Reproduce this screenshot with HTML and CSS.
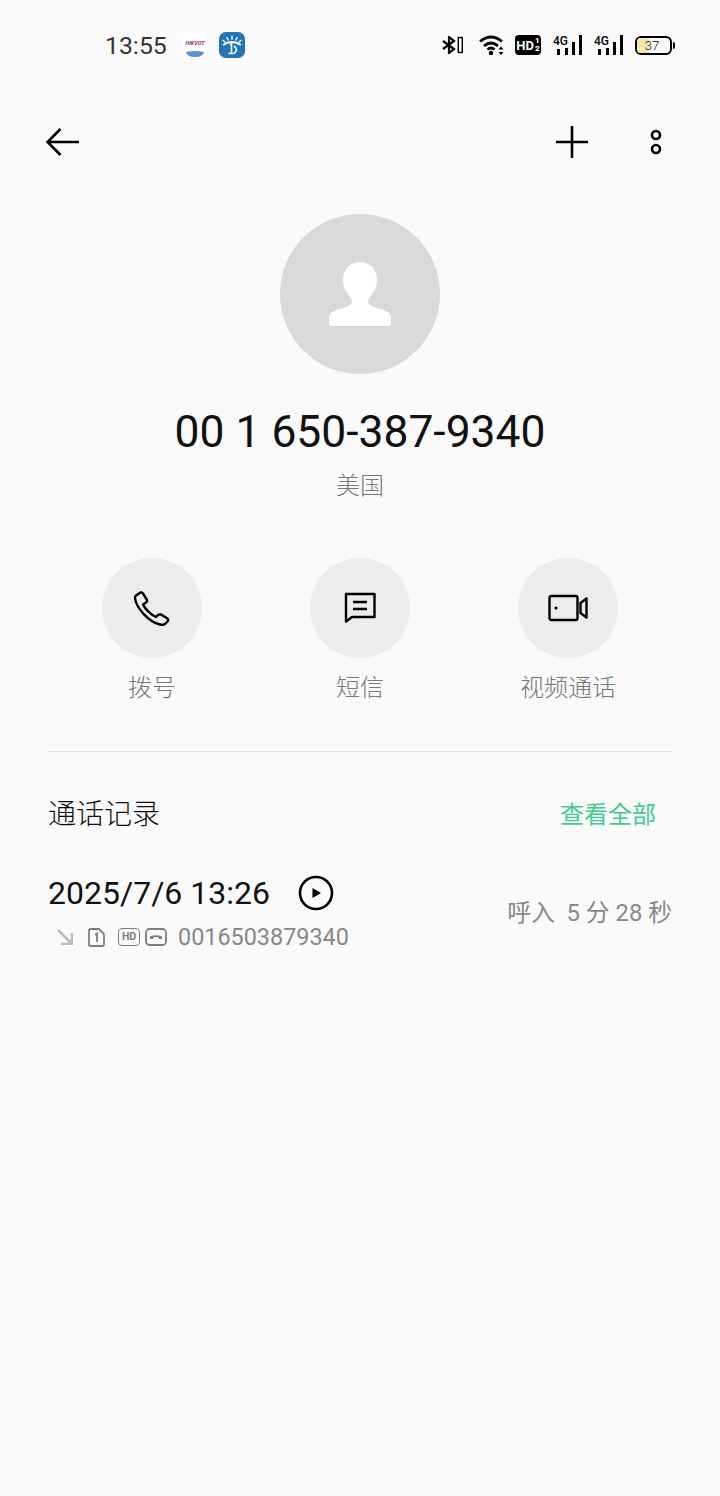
FILE: index.html
```html
<!DOCTYPE html>
<html lang="zh-CN">

<head>
      <meta charset="UTF-8">
      <meta name="viewport" content="width=device-width, initial-scale=1.0">
      <title>通话详情</title>
      <link rel="stylesheet" href="styles.css">
</head>

<body>
      <!-- Status bar -->
      <div class="status-bar">
            <div class="status-left">
                  <span class="time">13:55</span>
                  <svg class="app-hik" viewBox="0 0 26 26">
                        <rect width="24" height="26" rx="5" fill="#fff" />
                        <text x="12" y="13" text-anchor="middle" class="hik-text">HIKVOT</text>
                        <path d="M3 20q9-2 18 0q-1 5-9 5t-9-5z" fill="#5b8fd0" />
                  </svg>
                  <svg class="app-blue" viewBox="0 0 26 26">
                        <rect width="26" height="26" rx="7" fill="#2176b6" />
                        <path d="M4 13q9-6 18 0" fill="none" stroke="#fff" stroke-width="1.800" />
                        <path d="M13 3.500v4M7.500 5l2 3.500M18.500 5l-2 3.500M3.500 8l3 2.500M22.500 8l-3 2.500" stroke="#fff" stroke-width="1.400" />
                        <path d="M11 13l1.500-1v9M9.500 21.500h5M15 14q5 3.500 0 7.500" fill="none" stroke="#fff" stroke-width="1.600" />
                  </svg>
            </div>
            <div class="status-right">
                  <svg class="ic-bt" viewBox="0 0 21 18">
                        <path d="M1 5l11 8-5 4V1l5 4-11 8" fill="none" stroke="#000" stroke-width="2.200" />
                        <rect x="16.300" y="1.500" width="4" height="15" fill="none" stroke="#000" stroke-width="1.400" />
                  </svg>
                  <svg class="ic-wifi" viewBox="0 0 26 20">
                        <path d="M1 6.500q11-9 22 0M5 11q7-6 14 0M8.500 14.500q3.500-3 7 0" fill="none" stroke="#000" stroke-width="2.700" />
                        <circle cx="12" cy="18" r="2.200" />
                        <path d="M22 11.500l2.500 3h-5zM22 20l2.500-3h-5z" />
                  </svg>
                  <div class="ic-hd">HD<span class="hd-nums"><b>1</b><b>2</b></span></div>
                  <svg class="ic-signal" viewBox="0 0 29 20">
                        <text x="0" y="10" class="sig-text">4G</text>
                        <path d="M4 14h3v6H4zM12 13h3v7h-3zM19 7h3v13h-3zM26 0h3v20h-3z" />
                  </svg>
                  <svg class="ic-signal" viewBox="0 0 29 20">
                        <text x="0" y="10" class="sig-text">4G</text>
                        <path d="M4 14h3v6H4zM12 13h3v7h-3zM19 7h3v13h-3zM26 0h3v20h-3z" />
                  </svg>
                  <div class="ic-battery">
                        <div class="battery-body">
                              <div class="battery-level"></div>
                              <span class="battery-num">37</span>
                        </div>
                        <div class="battery-cap"></div>
                  </div>
            </div>
      </div>

      <!-- Toolbar -->
      <div class="toolbar">
            <svg class="ic-back" viewBox="0 0 34 34">
                  <path d="M33 17H2M14.500 4L1.500 17l13 13" fill="none" stroke="#000" stroke-width="2.600" />
            </svg>
            <div class="toolbar-right">
                  <svg class="ic-add" viewBox="0 0 34 34">
                        <path d="M17 1v32M1 17h32" fill="none" stroke="#000" stroke-width="2.600" />
                  </svg>
                  <svg class="ic-more" viewBox="0 0 16 28">
                        <circle cx="8" cy="7" r="4" fill="none" stroke="#000" stroke-width="2.600" />
                        <circle cx="8" cy="21" r="4" fill="none" stroke="#000" stroke-width="2.600" />
                  </svg>
            </div>
      </div>

      <!-- Contact -->
      <div class="contact">
            <svg class="avatar" viewBox="0 0 160 160">
                  <circle cx="80" cy="80" r="80" fill="#d9d9d9" />
                  <path fill="#fff" d="M80 48C69 48 63 56 63 66C63 74 67 79 71 84C73 88 72 91 66 93L54 97C50 99 49 101 49 105V110Q49 112 51 112H109Q111 112 111 110V105C111 101 110 99 106 97L94 93C88 91 87 88 89 84C93 79 97 74 97 66C97 56 91 48 80 48Z" />
            </svg>
            <div class="contact-number">00 1 650-387-9340</div>
            <div class="contact-region">美国</div>
      </div>

      <!-- Actions -->
      <div class="actions">
            <div class="action">
                  <div class="action-circle">
                        <svg viewBox="0 0 40 40">
                              <path d="M4 7.500L8.500 4.500Q10 4 11 5.500L15 12Q15.500 13.500 14 14.500L11 16.500C13 21 19 27 24 29L26 27Q27.500 26 29 26.500L35.500 30.500Q37 32 35.500 33.500L33 36Q31 37.500 28 36.500C17 34 4 20 3 10Q3 8.500 4 7.500Z" fill="none" stroke="#000" stroke-width="2.400" stroke-linejoin="round" />
                        </svg>
                  </div>
                  <div class="action-label">拨号</div>
            </div>
            <div class="action">
                  <div class="action-circle">
                        <svg viewBox="0 0 40 40">
                              <path d="M6 6H34.500V29H12L6 33.500Z" fill="none" stroke="#000" stroke-width="2.400" stroke-linejoin="round" />
                              <path d="M13 14H27M13 21H27" stroke="#000" stroke-width="2.400" />
                        </svg>
                  </div>
                  <div class="action-label">短信</div>
            </div>
            <div class="action">
                  <div class="action-circle">
                        <svg viewBox="0 0 40 40">
                              <rect x="1.500" y="8" width="28" height="24" rx="2" fill="none" stroke="#000" stroke-width="2.400" />
                              <circle cx="8" cy="20" r="1.600" />
                              <path d="M38.500 10.500V29.500L32.500 25V15Z" fill="none" stroke="#000" stroke-width="2.400" stroke-linejoin="round" />
                        </svg>
                  </div>
                  <div class="action-label">视频通话</div>
            </div>
      </div>

      <div class="divider"></div>

      <!-- Call log -->
      <div class="log-header">
            <div class="log-title">通话记录</div>
            <div class="log-all">查看全部</div>
      </div>

      <div class="log-row">
            <div class="log-left">
                  <div class="log-date">
                        <span>2025/7/6 13:26</span>
                        <svg class="ic-play" viewBox="0 0 36 36">
                              <circle cx="18" cy="18" r="16" fill="none" stroke="#000" stroke-width="2.600" />
                              <path d="M14.500 13L23 18l-8.500 5z" />
                        </svg>
                  </div>
                  <div class="log-sub">
                        <svg class="ic-in" viewBox="0 0 16 16">
                              <path d="M1 1L14 14M15 4V15H4" fill="none" stroke="#bdbdbd" stroke-width="2.600" />
                        </svg>
                        <svg class="ic-sim" viewBox="0 0 17 19">
                              <path d="M2.500 1H11L16 6V16.500Q16 18 14.500 18H2.500Q1 18 1 16.500V2.500Q1 1 2.500 1Z" fill="none" stroke="#7d7d7d" stroke-width="1.800" />
                              <path d="M7 7L9 5.500V14" fill="none" stroke="#7d7d7d" stroke-width="1.800" />
                        </svg>
                        <div class="ic-tag">HD</div>
                        <svg class="ic-hang" viewBox="0 0 22 18">
                              <rect x="1" y="1" width="20" height="16" rx="3.500" fill="none" stroke="#7d7d7d" stroke-width="1.800" />
                              <path d="M5 11V8.500Q11 6 17 8.500V11H14V9.500Q11 8.500 8 9.500V11Z" fill="#7d7d7d" />
                        </svg>
                        <span class="log-number">0016503879340</span>
                  </div>
            </div>
            <div class="log-info">呼入&nbsp; 5 分 28 秒</div>
      </div>
</body>

</html>
```

FILE: styles.css
```css
body {
      margin: 0;
      background-color: #fafafa;
      color: #000;
      font-family: Roboto, "Noto Sans CJK SC", sans-serif;
}

svg {
      display: block;
      flex: none;
}

/* Status bar */
.status-bar {
      height: 90px;
      display: flex;
      justify-content: space-between;
      align-items: center;
      padding: 0 45px 0 105px;
}

.status-left,
.status-right {
      display: flex;
      align-items: center;
}

.time {
      width: 78px;
      font-size: 24.800px;
      color: #333;
}

.app-hik,
.app-blue {
      width: 26px;
      height: 26px;
}

.app-blue {
      margin-left: 10px;
}

.hik-text {
      font-size: 5.500px;
      font-weight: 700;
      font-style: italic;
      fill: #a52a35;
}

.ic-bt {
      width: 21px;
      height: 18px;
}

.ic-wifi {
      width: 26px;
      height: 20px;
      margin-left: 16px;
}

.ic-hd {
      width: 26px;
      height: 20px;
      margin-left: 10px;
      display: flex;
      align-items: center;
      justify-content: center;
      background-color: #000;
      border-radius: 4px;
      color: #fff;
      font-size: 13px;
      font-weight: 700;
      line-height: 1;
}

.hd-nums {
      display: flex;
      flex-direction: column;
      font-size: 8px;
      margin-left: 1px;
}

.ic-signal {
      width: 29px;
      height: 20px;
      margin-left: 12px;
}

.sig-text {
      font-size: 12px;
      font-weight: 500;
}

.ic-battery {
      display: flex;
      align-items: center;
      margin-left: 12px;
}

.battery-body {
      width: 33px;
      height: 15px;
      border: 2px solid #000;
      border-radius: 6px;
      position: relative;
      overflow: hidden;
}

.battery-level {
      width: 37%;
      height: 100%;
      background-color: #f8e6b0;
}

.battery-num {
      position: absolute;
      inset: 0;
      padding-right: 3px;
      text-align: center;
      font-size: 13px;
      font-weight: 300;
      line-height: 15px;
      color: #111;
}

.battery-cap {
      width: 2px;
      height: 7px;
      margin-left: 1px;
      background-color: #000;
      border-radius: 0 2px 2px 0;
}

/* Toolbar */
.toolbar {
      height: 34px;
      margin-top: 35px;
      display: flex;
      justify-content: space-between;
      align-items: center;
      padding: 0 56px 0 46px;
}

.toolbar-right {
      display: flex;
      align-items: center;
      gap: 59px;
}

.ic-back,
.ic-add {
      width: 34px;
      height: 34px;
}

.ic-more {
      width: 16px;
      height: 28px;
}

/* Contact */
.contact {
      margin-top: 55px;
      display: flex;
      flex-direction: column;
      align-items: center;
}

.avatar {
      width: 160px;
      height: 160px;
}

.contact-number {
      margin-top: 30px;
      font-size: 44.400px;
      line-height: 56px;
      color: #111;
}

.contact-region {
      margin-top: 10px;
      font-size: 24px;
      font-weight: 300;
      line-height: 32px;
      color: #777;
}

/* Actions */
.actions {
      margin-top: 56px;
      padding: 0 48px;
      display: grid;
      grid-template-columns: repeat(3, 1fr);
}

.action {
      display: flex;
      flex-direction: column;
      align-items: center;
}

.action-circle {
      width: 100px;
      height: 100px;
      border-radius: 50%;
      background-color: #ececec;
      display: flex;
      align-items: center;
      justify-content: center;
}

.action-circle svg {
      width: 40px;
      height: 40px;
}

.action-label {
      margin-top: 14px;
      font-size: 24px;
      font-weight: 300;
      line-height: 32px;
      color: #777;
}

.divider {
      height: 1px;
      margin: 47px 48px 0;
      background-color: #e6e6e6;
}

/* Call log */
.log-header {
      margin-top: 43px;
      padding: 0 64px 0 48px;
      display: flex;
      justify-content: space-between;
      align-items: center;
      height: 33px;
}

.log-title {
      font-size: 28px;
      font-weight: 300;
      color: #111;
}

.log-all {
      margin-top: 2px;
      font-size: 24px;
      color: #3fcb8f;
}

.log-row {
      margin-top: 45px;
      padding: 0 48px;
      display: flex;
      justify-content: space-between;
      align-items: center;
}

.log-date {
      height: 40px;
      display: flex;
      align-items: center;
      gap: 28px;
      font-size: 32px;
      color: #111;
}

.ic-play {
      width: 36px;
      height: 36px;
}

.log-sub {
      margin-top: 12px;
      height: 24px;
      display: flex;
      align-items: center;
      padding-left: 9px;
      color: #7d7d7d;
}

.ic-in {
      width: 16px;
      height: 16px;
}

.ic-sim {
      width: 17px;
      height: 19px;
      margin-left: 15px;
}

.ic-tag {
      width: 20px;
      height: 16px;
      margin-left: 13px;
      border: 1.800px solid #7d7d7d;
      border-radius: 4px;
      font-size: 10.500px;
      font-weight: 700;
      line-height: 16px;
      text-align: center;
}

.ic-hang {
      width: 22px;
      height: 18px;
      margin-left: 5px;
}

.log-number {
      margin-left: 11px;
      font-size: 23.400px;
      color: #888;
}

.log-info {
      margin-top: -2px;
      font-size: 23.800px;
      color: #888;
}
```
